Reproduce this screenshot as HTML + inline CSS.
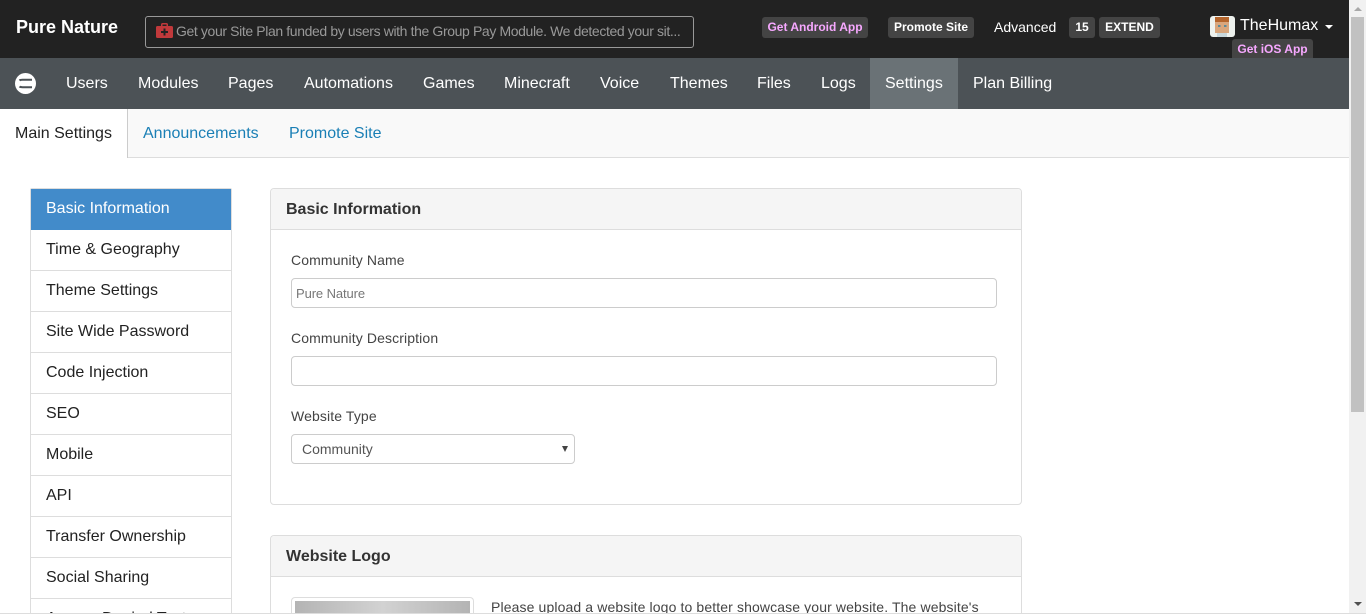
<!DOCTYPE html>
<html><head><meta charset="utf-8"><title>Settings</title>
<style>
html,body{margin:0;padding:0;width:1366px;height:614px;overflow:hidden;background:#fff;font-family:"Liberation Sans",Arial,sans-serif}
#w{position:relative;width:1366px;height:614px;overflow:hidden}
.a{position:absolute;white-space:nowrap}
.n{top:58px;height:51px;line-height:51px;font-size:16px;color:#fff}
.b{background:#444;border-radius:3px;color:#fff;font-weight:bold;font-size:12px;text-align:center}
.p{color:#f7a8ff}
.s{left:30px;height:41px;line-height:40px;padding-left:15px;box-sizing:border-box;width:202px;border-bottom:1px solid #ddd;border-left:1px solid #ddd;border-right:1px solid #ddd;font-size:16px;color:#222;background:#fff}
.panel{left:270px;width:752px;box-sizing:border-box;border:1px solid #ddd;border-radius:4px;background:#fff}
.ph{left:271px;width:750px;height:40px;background:#f5f5f5;border-bottom:1px solid #ddd;border-radius:4px 4px 0 0}
.pt{left:286px;font-size:16px;font-weight:bold;color:#333}
.l{left:291px;font-size:14px;color:#444;letter-spacing:.12px}
.i{left:291px;box-sizing:border-box;border:1px solid #ccc;border-radius:4px;background:#fff}
.t{font-size:16px;color:#1a7fb5;top:109px;height:48px;line-height:49px}
</style></head><body><div id="w">
<div class="a" style="left:0;top:0;width:1349px;height:58px;background:#222"></div>
<div class="a" style="left:16px;top:17px;font-size:18px;line-height:21px;font-weight:bold;color:#fff">Pure Nature</div>
<div class="a" style="left:145px;top:16px;width:549px;height:32px;box-sizing:border-box;border:1px solid #999;border-radius:3px"></div>
<svg class="a" style="left:156px;top:23px" width="17" height="15" viewBox="0 0 17 15"><path d="M5 4V1.500C5 .7 5.700 0 6.500 0h4C11.300 0 12 .7 12 1.500V4h-1.500V1.500h-4V4z" fill="#c0393b"/><rect x="0" y="3" width="17" height="12" rx="1.500" fill="#c0393b"/><path d="M7.500 5.500h2v2.500h2.500v2H9.500v2.500h-2V10H5V8h2.500z" fill="#222"/></svg>
<div class="a" style="left:176px;top:22px;font-size:14px;line-height:18px;color:#999;letter-spacing:-.38px">Get your Site Plan funded by users with the Group Pay Module. We detected your sit...</div>
<div class="a b p" style="left:762px;top:17px;width:106px;height:21px;line-height:20px">Get Android App</div>
<div class="a b" style="left:888px;top:17px;width:86px;height:21px;line-height:20px">Promote Site</div>
<div class="a" style="left:994px;top:17px;font-size:14px;line-height:20px;color:#fff">Advanced</div>
<div class="a b" style="left:1069px;top:17px;width:26px;height:21px;line-height:20px">15</div>
<div class="a b" style="left:1099px;top:17px;width:61px;height:21px;line-height:20px">EXTEND</div>
<svg class="a" style="left:1210px;top:16px" width="25" height="21" viewBox="0 0 25 21"><rect width="25" height="21" rx="3" fill="#eef2ee"/><rect x="5" y="2" width="14" height="15" fill="#d9a67c"/><rect x="5" y="1" width="14" height="5" fill="#b5652c"/><rect x="8" y="9" width="2.500" height="2" fill="#5a8a9a"/><rect x="14" y="9" width="2.500" height="2" fill="#5a8a9a"/><rect x="7" y="17" width="10" height="4" fill="#c8d8dc"/></svg>
<div class="a" style="left:1240px;top:16px;font-size:16px;line-height:19px;color:#fff">TheHumax</div>
<div class="a" style="left:1325px;top:25px;width:0;height:0;border-left:4px solid transparent;border-right:4px solid transparent;border-top:4px solid #fff"></div>

<div class="a" style="left:0;top:58px;width:1349px;height:51px;background:#4c5256"></div>
<div class="a b p" style="left:1232px;top:39px;width:81px;height:19px;line-height:20px;border-radius:3px 3px 0 0">Get iOS App</div>
<svg class="a" style="left:15px;top:73px" width="22" height="21" viewBox="0 0 22 21"><circle cx="10.500" cy="10.500" r="10.500" fill="#fff"/><path d="M4.500 7.500C5 7 6 6.800 7.500 6.800H17M4.500 13.500C5 14 6 14.200 7.500 14.200H17" fill="none" stroke="#4c5256" stroke-width="2"/></svg>
<div class="a n" style="left:66px">Users</div>
<div class="a n" style="left:138px">Modules</div>
<div class="a n" style="left:228px">Pages</div>
<div class="a n" style="left:304px">Automations</div>
<div class="a n" style="left:423px">Games</div>
<div class="a n" style="left:504px">Minecraft</div>
<div class="a n" style="left:600px">Voice</div>
<div class="a n" style="left:670px">Themes</div>
<div class="a n" style="left:757px">Files</div>
<div class="a n" style="left:821px">Logs</div>
<div class="a" style="left:870px;top:58px;width:88px;height:51px;background:#6a7276"></div>
<div class="a n" style="left:885px">Settings</div>
<div class="a n" style="left:973px">Plan Billing</div>

<div class="a" style="left:0;top:109px;width:1349px;height:49px;background:#f9f9f9;border-bottom:1px solid #ddd;box-sizing:border-box"></div>
<div class="a" style="left:0;top:109px;width:128px;height:49px;background:#fff;border-right:1px solid #ccc;box-sizing:border-box"></div>
<div class="a t" style="left:15px;color:#222">Main Settings</div>
<div class="a t" style="left:143px">Announcements</div>
<div class="a t" style="left:289px">Promote Site</div>

<div class="a" style="left:30px;top:188px;width:202px;height:2px;background:#ddd;border-radius:3px 3px 0 0"></div>
<div class="a s" style="top:189px;background:#428bca;color:#fff;border-color:#428bca;border-bottom:0;border-left-color:#ddd;border-right-color:#ddd;line-height:40px">Basic Information</div>
<div class="a s" style="top:230px">Time &amp; Geography</div>
<div class="a s" style="top:271px">Theme Settings</div>
<div class="a s" style="top:312px">Site Wide Password</div>
<div class="a s" style="top:353px">Code Injection</div>
<div class="a s" style="top:394px">SEO</div>
<div class="a s" style="top:435px">Mobile</div>
<div class="a s" style="top:476px">API</div>
<div class="a s" style="top:517px">Transfer Ownership</div>
<div class="a s" style="top:558px">Social Sharing</div>
<div class="a s" style="top:599px;height:14px;border-bottom:0;overflow:hidden">Access Denied Text</div>

<div class="a panel" style="top:188px;height:317px"></div>
<div class="a ph" style="top:189px"></div>
<div class="a pt" style="top:200px;line-height:19px">Basic Information</div>
<div class="a l" style="top:252px;line-height:16px">Community Name</div>
<div class="a i" style="top:278px;width:706px;height:30px"></div>
<div class="a" style="left:296px;top:286px;font-size:13px;line-height:15px;color:#777;letter-spacing:-.1px">Pure Nature</div>
<div class="a l" style="top:330px;line-height:16px">Community Description</div>
<div class="a i" style="top:356px;width:706px;height:30px"></div>
<div class="a l" style="top:408px;line-height:16px">Website Type</div>
<div class="a i" style="top:434px;width:284px;height:30px"></div>
<div class="a" style="left:302px;top:441px;font-size:14px;line-height:16px;color:#555">Community</div>
<div class="a" style="left:562px;top:446px;width:0;height:0;border-left:3.500px solid transparent;border-right:3.500px solid transparent;border-top:6px solid #444"></div>

<div class="a panel" style="top:535px;height:78px;border-bottom:0;border-radius:4px 4px 0 0"></div>
<div class="a ph" style="top:536px"></div>
<div class="a pt" style="top:547px;line-height:19px">Website Logo</div>
<div class="a" style="left:291px;top:597px;width:183px;height:16px;box-sizing:border-box;border:1px solid #ddd;border-bottom:0;border-radius:4px 4px 0 0;background:#fff"></div>
<div class="a" style="left:295px;top:601px;width:175px;height:12px;background:linear-gradient(90deg,#b4b4b4,#d2d2d2 50%,#b4b4b4)"></div>
<div class="a" style="left:491px;top:598px;height:15px;overflow:hidden;font-size:14px;line-height:18px;color:#444;letter-spacing:.12px">Please upload a website logo to better showcase your website. The website's</div>

<div class="a" style="left:0;top:613px;width:1366px;height:1px;background:#ddd"></div>
<div class="a" style="left:1349px;top:0;width:17px;height:613px;background:#f1f1f1"></div>
<div class="a" style="left:1351px;top:17px;width:13px;height:395px;background:#c1c1c1"></div>
<div class="a" style="left:1354px;top:7px;width:0;height:0;border-left:4px solid transparent;border-right:4px solid transparent;border-bottom:4px solid #a8a8a8"></div>
<div class="a" style="left:1354px;top:602px;width:0;height:0;border-left:4px solid transparent;border-right:4px solid transparent;border-top:4px solid #505050"></div>
</div></body></html>
